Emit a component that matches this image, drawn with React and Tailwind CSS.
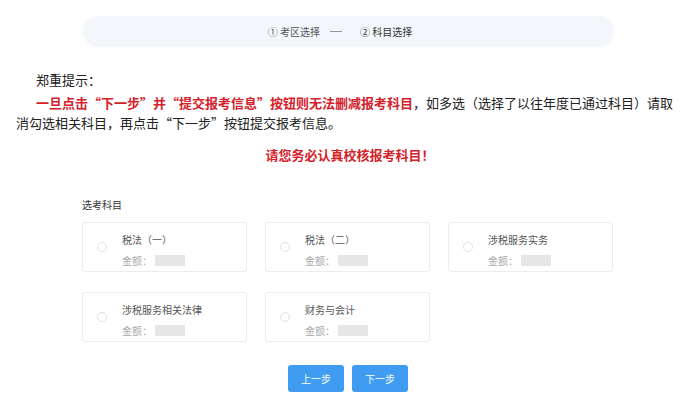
import React from "react";

const font = { fontFamily: '"Noto Sans CJK SC", "Noto Sans", sans-serif' };

function Card({ title }) {
  return (
    <div className="h-[50px] border border-[#ececec] rounded-[3px] bg-white flex items-center pl-[14px]">
      <div className="w-[10px] h-[10px] rounded-full border border-[#e2e2e2] mr-[15px] shrink-0" />
      <div className="flex flex-col pt-[6px]">
        <div className="text-[10px] leading-[14px] text-[#555] whitespace-nowrap">{title}</div>
        <div className="flex items-center mt-[7px]">
          <span className="text-[10px] leading-[14px] text-[#aaa]">金额：</span>
          <span className="ml-[3px] w-[30px] h-[11px] bg-[#e6e6e6]" />
        </div>
      </div>
    </div>
  );
}

export default function App() {
  return (
    <div className="w-[700px] h-[402px] bg-white overflow-hidden" style={font}>
      <div className="pt-[17px] pl-[84px] pr-[87px]">
        <div className="h-[29px] rounded-full bg-[#f3f6fb] shadow-[0_0_3px_rgba(200,210,225,0.4)] flex items-center justify-center pr-[17px] text-[10px] text-[#555] whitespace-nowrap">
          <span>①&nbsp;考区选择</span>
          <span className="ml-[10px] mr-[18px] w-[12px] h-px bg-[#999]" />
          <span className="text-[#333]">②&nbsp;科目选择</span>
        </div>
      </div>

      <div className="mt-[24px] pl-[36px] text-[13px] leading-[20px] text-[#222]">郑重提示：</div>
      <div className="mt-[3px] text-[13px] leading-[20px] text-[#222] whitespace-nowrap">
        <div className="pl-[36px]">
          <span className="font-bold text-[#d4222c]">一旦点击“下一步”并“提交报考信息”按钮则无法删减报考科目</span>
          <span>，如多选（选择了以往年度已通过科目）请取</span>
        </div>
        <div className="pl-[16px]">消勾选相关科目，再点击“下一步”按钮提交报考信息。</div>
      </div>

      <div className="mt-[12px] text-center text-[13px] leading-[20px] font-bold text-[#d4222c]">
        请您务必认真校核报考科目！
      </div>

      <div className="mt-[33px] pl-[82px] w-[613px]">
        <div className="text-[10px] leading-[14px] text-[#333]">选考科目</div>
        <div className="mt-[10px] grid grid-cols-3 gap-x-[18px] gap-y-[20px]">
          <Card title="税法（一）" />
          <Card title="税法（二）" />
          <Card title="涉税服务实务" />
          <Card title="涉税服务相关法律" />
          <Card title="财务与会计" />
        </div>
      </div>

      <div className="mt-[23px] flex justify-center gap-[8px] pr-[4px]">
        <button className="w-[56px] h-[27px] rounded-[3px] bg-[#3f9cf0] text-white text-[10px]">上一步</button>
        <button className="w-[56px] h-[27px] rounded-[3px] bg-[#3f9cf0] text-white text-[10px]">下一步</button>
      </div>
    </div>
  );
}
